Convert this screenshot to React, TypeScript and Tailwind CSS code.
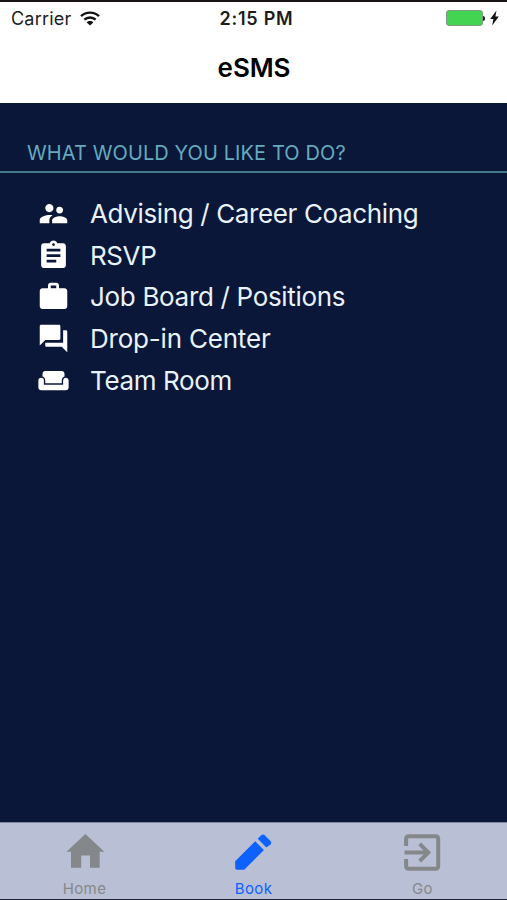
import type { IconType } from 'react-icons'
import {
  MdAssignment,
  MdForum,
  MdSupervisorAccount,
  MdWeekend,
  MdWork
} from 'react-icons/md'

interface MenuItem {
  label: string
  icon: IconType
  spacing: string
}

const menuItems: MenuItem[] = [
  { label: 'Advising / Career Coaching', icon: MdSupervisorAccount, spacing: 'tracking-[-0.37px]' },
  { label: 'RSVP', icon: MdAssignment, spacing: 'tracking-[-0.4px]' },
  { label: 'Job Board / Positions', icon: MdWork, spacing: 'tracking-[-0.32px]' },
  { label: 'Drop-in Center', icon: MdForum, spacing: 'tracking-[-0.2px]' },
  { label: 'Team Room', icon: MdWeekend, spacing: 'tracking-[-0.36px]' }
]

function HomeIcon({ size }: { size: number }) {
  return (
    <svg width={size} height={size} viewBox="0 0 47 47" fill="currentColor">
      <path d="M24.4 5L43.3 22.8H38.7V38.8H29V26.6H20.2V38.8H10V22.8H5.5Z" />
    </svg>
  )
}

function PencilIcon({ size }: { size: number }) {
  return (
    <svg width={size} height={size} viewBox="0 0 47 47" fill="currentColor">
      <path d="M5.2 32.3L25.2 12.3L33.9 21L14.2 40.7H7Q5.2 40.7 5.2 38.9Z" />
      <path d="M27.7 9.8L31.3 6.2Q33 4.6 34.7 6.2L40.5 12Q42.2 13.8 40.5 15.5L36.4 18.5Z" />
    </svg>
  )
}

function ExitIcon({ size }: { size: number }) {
  return (
    <svg width={size} height={size} viewBox="0 0 47 47" fill="none" stroke="currentColor" strokeWidth="4">
      <path d="M7.1 17V10Q7.1 7.2 9.9 7.2H36.4Q39.2 7.2 39.2 10V37Q39.2 39.8 36.4 39.8H9.9Q7.1 39.8 7.1 37V30" />
      <path d="M5.5 23.5H30" />
      <path d="M20.7 14.9L29.3 23.5L20.7 32.1" />
    </svg>
  )
}

const tabs = [
  { label: 'Home', icon: HomeIcon, active: false },
  { label: 'Book', icon: PencilIcon, active: true },
  { label: 'Go', icon: ExitIcon, active: false }
]

function WifiIcon() {
  return (
    <svg width="20" height="15" viewBox="0 0 20 15" fill="none" stroke="#111" strokeWidth="2.4">
      <path d="M1 5.2C6 0.4 14 0.4 19 5.2" />
      <path d="M4.3 8.7C7.5 5.7 12.5 5.7 15.7 8.7" />
      <path d="M10 14.6L6.7 11.4C8.4 9.6 11.6 9.6 13.3 11.4Z" fill="#111" stroke="none" />
    </svg>
  )
}

function Battery() {
  return (
    <div className="flex items-center">
      <div className="h-4 w-[37px] rounded-[3px] border border-[#7d9a80] bg-[#43d551]" />
      <div className="h-[5px] w-[2px] rounded-r-sm bg-[#222]" />
      <svg className="ml-[5px]" width="9" height="16" viewBox="0 0 9 16" fill="#111">
        <path d="M6.5 0.5L0.2 9H3.4L2.2 15.5L8.8 6.4H5.4Z" />
      </svg>
    </div>
  )
}

function StatusBar() {
  return (
    <div className="grid h-8 grid-cols-3 items-center pr-2 pl-[11px] text-[18px] text-[#1c1c1c]">
      <div className="flex items-center gap-[9px]">
        <span className="tracking-[0.2px]">Carrier</span>
        <WifiIcon />
      </div>
      <span className="pl-[3px] text-center font-semibold tracking-[0.75px]">2:15 PM</span>
      <div className="flex justify-end">
        <Battery />
      </div>
    </div>
  )
}

export default function App() {
  return (
    <div className="flex h-[900px] w-[507px] flex-col overflow-hidden bg-[#0a1739] font-['Inter',sans-serif]">
      <header className="h-[103px] border-t-2 border-[#171316] bg-white">
        <StatusBar />
        <h1 className="flex h-[67px] items-center justify-center pl-px text-[26px] font-semibold tracking-[-0.1px] text-black">
          eSMS
        </h1>
      </header>

      <main className="flex-1">
        <h2 className="flex h-[70px] items-end border-b-2 border-[#44798c] pb-1 pl-[27px] text-[20px] leading-[28px] tracking-[0.1px] text-[#65aabd]">
          WHAT WOULD YOU LIKE TO DO?
        </h2>
        <ul className="pt-5">
          {menuItems.map(({ label, icon: Icon, spacing }) => (
            <li key={label} className="flex h-[41.6px] items-center pl-[37px] text-[#e8f2fa]">
              <Icon size={33} className="shrink-0 text-white" />
              <span className={`pl-5 text-[26px] whitespace-nowrap ${spacing}`}>{label}</span>
            </li>
          ))}
        </ul>
      </main>

      <nav className="grid h-[78px] grid-cols-3 border-t border-b border-t-[#7c839b] border-b-[#20243a] bg-[#b9bfd4]">
        {tabs.map(({ label, icon: Icon, active }) => (
          <button
            key={label}
            className={`flex flex-col items-center pt-[6px] ${active ? 'text-[#0d62ff]' : 'text-[#85888b]'}`}
          >
            <Icon size={47} />
            <span className="mt-[3px] text-[15px] leading-5 tracking-[0.4px]">{label}</span>
          </button>
        ))}
      </nav>
    </div>
  )
}
